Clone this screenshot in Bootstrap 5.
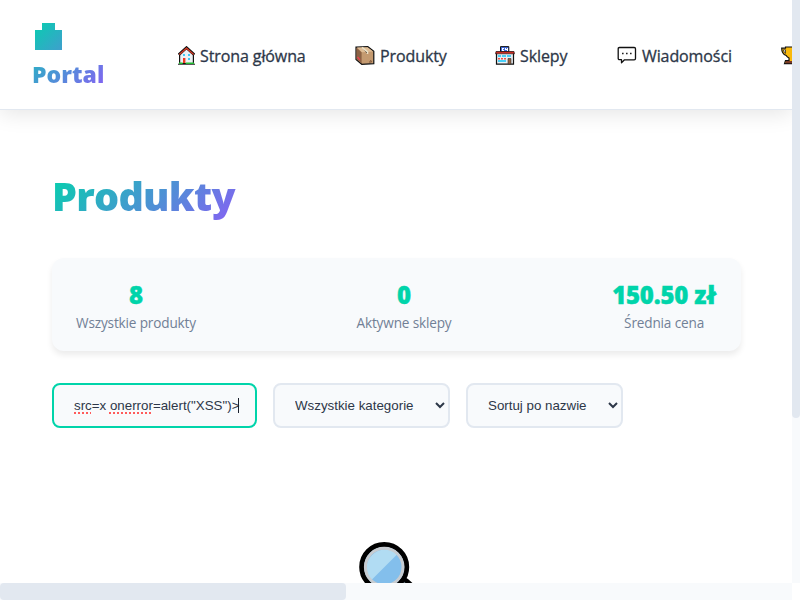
<!DOCTYPE html>
<html lang="pl">
<head>
<meta charset="utf-8">
<meta name="viewport" content="width=device-width, initial-scale=1">
<title>Portal – Produkty</title>
<link href="https://cdn.jsdelivr.net/npm/bootstrap@5.3.0/dist/css/bootstrap.min.css" rel="stylesheet">
<style>
body{font-family:"Open Sans","Noto Sans",sans-serif;color:#2d3748;background:#fff;width:800px;height:600px}
.viewport{width:792px;height:583px}
.topbar{height:110px;border-bottom:1px solid #e2e8f0;box-shadow:0 4px 20px rgba(0,0,0,.1);background:#fff;padding:0 0 0 32px;flex:none}
.brand{width:72px;margin-right:74px;padding-top:23px}
.brand svg{display:block;margin-left:3px}
.brand-name,.title{background:linear-gradient(135deg,#00d4aa,#8b5cf6);-webkit-background-clip:text;background-clip:text;color:transparent;font-weight:800}
.brand-name{font-size:23px;letter-spacing:0;line-height:36px;margin-top:6px;width:75px;white-space:nowrap;background:linear-gradient(135deg,#27b4c2,#8b5cf6);-webkit-background-clip:text;background-clip:text}
.menu{height:110px;flex:none}
.menu a{color:#2d3748;font-weight:500;font-size:16px;text-decoration:none;white-space:nowrap;gap:5px;letter-spacing:-.1px;flex:none}
.menu span{-webkit-text-stroke:.3px #2d3748;padding-top:1px}
.w-home{width:177px}.w-products{width:140px}.w-shops{width:122px}.w-messages{width:164px}
.menu svg{flex:none}
.content{padding:56px 51px 0 52px}
.title{font-size:39.5px;letter-spacing:-.75px;line-height:60px;margin:0;width:188px;white-space:nowrap}
.stats{height:93px;margin-top:32px;background:#f8fafc;border-radius:12px;box-shadow:0 4px 6px rgba(0,0,0,.08);padding:20px 25px 20px 24px}
.stats strong{display:block;font-size:24px;line-height:34px;font-weight:800;color:#00d4aa;white-space:nowrap;letter-spacing:-.2px;-webkit-text-stroke:.4px #00d4aa}
.stats span{display:block;font-size:13.6px;line-height:21px;color:#718096;white-space:nowrap;letter-spacing:-.16px}
.filters{gap:16px;margin-top:32px}
.field{height:45px;border:2px solid #e2e8f0;border-radius:8px;background:#f8fafc;color:#2d3748;font:13.333px/41px "Liberation Sans",Arial,sans-serif}
.query{width:205px;border-color:#00d4aa;padding-left:20px;white-space:pre}
.misspelt{text-decoration:underline dotted #ff5b5b 1.5px;text-underline-offset:2px;text-decoration-skip-ink:none}
.caret{width:1px;height:15px;background:#1a202c;margin-left:-1px}
.cat{width:177px;padding-left:16px;padding-right:3px}
.sort{width:157px;padding-left:16px;padding-right:3px}
.lens{margin:113px 0 0 307px;display:block}
.vbar{width:8px;height:583px;background:#f8fafc}
.vbar div{height:418px;background:#e2e8f0;border-radius:0 0 4px 4px}
.hbar{width:792px;height:17px;background:#f8fafc}
.hbar div{width:346px;height:17px;background:#e2e8f0;border-radius:4px}
</style>
</head>
<body class="overflow-hidden">
<div class="d-flex">
<div class="viewport overflow-hidden">
<header class="topbar d-flex overflow-visible">
  <div class="brand flex-shrink-0">
    <svg width="27" height="27" viewBox="0 0 27 27"><defs><linearGradient id="g" x1="0" y1="0" x2="1" y2="1"><stop stop-color="#08cdb0"/><stop offset="1" stop-color="#3f9fcd"/></linearGradient></defs><path fill="url(#g)" d="M0 7h7V0h13v7h7v20H0z"/></svg>
    <div class="brand-name">Portal</div>
  </div>
  <nav class="menu d-flex align-items-center">
    <a href="#" class="w-home d-flex align-items-center"><svg width="17" height="19" viewBox="0 0 17 19"><path fill="#edf1f5" stroke="#111" stroke-width="1.2" d="M1.6 17.5V8L8.5 1.8 15.4 8v9.5z"/><path fill="none" stroke="#111" stroke-width="2.8" d="M.7 8.7 8.5 1.7l7.8 7"/><path fill="none" stroke="#d83b26" stroke-width="1.3" d="m1.3 8.5 7.2-6.3 7.2 6.3"/><path fill="#43c9f5" d="M5 8h2v2H5zm5 0h2v2h-2zm0 4h2v2h-2z"/><path fill="#ef3922" d="M5 12h2.4v5H5z"/><path stroke="#111" d="M0 18.2h17"/><path stroke="#22bd32" stroke-width="1.4" d="M1 17.2h3.7m3 0H16"/></svg><span>Strona główna</span></a>
    <a href="#" class="w-products d-flex align-items-center"><svg width="20" height="19" viewBox="0 0 20 19"><path fill="#c49a70" stroke="#111" stroke-width="1.2" d="M1 1.2 12.8.7l6 4.7v12.2l-12 .7L1 13.5z"/><path fill="#8c6244" d="m1.6 1.8 5 4.5v11.2l-5-4.2z"/><path fill="#dfbd95" d="m2 1.6 10.6-.4L18 5.5 7 6.2z"/><path stroke="#eee2c8" stroke-width="1.6" d="m7 1.3 5.5 4.5V8"/><path stroke="#ef4050" stroke-width="1.3" d="m2.5 11 2.5 3"/><path stroke="#7c5438" d="M14 16h2.5m-1-2 1 2"/></svg><span>Produkty</span></a>
    <a href="#" class="w-shops d-flex align-items-center"><svg width="20" height="19" viewBox="0 0 20 19"><path fill="#e9edf1" stroke="#111" stroke-width="1.2" d="M1.5 6h17v12.2h-17z"/><path fill="#426ce0" stroke="#111" d="M5.5.6h8.3v5H5.5z"/><path fill="#fff" d="M7 2h2v1H8v1h1v1H7zm3 0h1v1h1V2h1v3h-1V4h-2z"/><path fill="#d72d22" stroke="#111" stroke-width=".6" d="M1 5.6h18l.5 2.2H.5z"/><path fill="#48cff7" d="M3 9h3v2H3zm4 0h4v2H7zm5 0h4v2h-4zm-9 5h8v2H3z"/><path fill="none" stroke="#ef5147" stroke-width="1.4" stroke-dasharray="2 1" d="M3 12.7h9"/><path fill="#96603d" stroke="#333" stroke-width=".6" d="M13 12.5h3V18h-3z"/></svg><span>Sklepy</span></a>
    <a href="#" class="w-messages d-flex align-items-center"><svg width="20" height="18" viewBox="0 0 20 18"><path fill="#fff" stroke="#111" stroke-width="1.3" stroke-linejoin="round" d="M2.5 1.5h14.7q1.3 0 1.3 1.3v9.7q0 1.3-1.3 1.3H7.5L4.5 16.7v-3h-2q-1.3 0-1.3-1.3V2.8q0-1.3 1.3-1.3z"/><path fill="#222" d="M5 6.7h1.6v1.6H5zm4 0h1.6v1.6H9zm4 0h1.6v1.6H13z"/></svg><span>Wiadomości</span></a>
    <a href="#" class="d-flex" aria-label="Ranking"><svg width="20" height="19" viewBox="0 0 20 19"><path fill="#f9b90b" stroke="#111" stroke-width="1.2" d="M4.5 1h11v1.2h3.8q0 6.7-5.2 7.5Q12 11.5 12 12v2.5h2.5l1 3.2h-12l1-3.2H8V12q-2-1-2.8-2.5Q.7 8 .7 2.2h3.8z"/><path fill="#fff" stroke="#111" stroke-width=".7" d="M2.3 3.8h2.2v3.5q-1.6-.9-2.2-3.5z"/><path fill="#7b3924" d="M5 15h10l.5 2.2h-11z"/></svg></a>
  </nav>
</header>
<main class="content">
  <h1 class="title">Produkty</h1>
  <section class="stats d-flex justify-content-between text-center">
    <div><strong>8</strong><span>Wszystkie produkty</span></div>
    <div><strong>0</strong><span>Aktywne sklepy</span></div>
    <div><strong>150.50 zł</strong><span>Średnia cena</span></div>
  </section>
  <form class="filters d-flex">
    <div class="field query d-flex align-items-center" role="textbox"><span class="misspelt">src</span><span>=x </span><span class="misspelt">onerror</span><span>=alert("XSS")&gt;</span><i class="caret"></i></div>
    <select class="field cat"><option>Wszystkie kategorie</option></select>
    <select class="field sort"><option>Sortuj po nazwie</option></select>
  </form>
  <svg class="lens" width="56" height="56" viewBox="0 0 56 56"><path stroke="#000" stroke-width="12" stroke-linecap="round" d="m45 42.5 10 9"/><path stroke="#667782" stroke-width="5" d="m39 38 8 8"/><circle cx="25.2" cy="26" r="22.5" fill="#83bfec" stroke="#000" stroke-width="5"/><path fill="#b1dcf3" d="M12 39.5A18.8 18.8 0 0 1 38.5 13z"/><circle cx="25.2" cy="26" r="18.8" fill="none" stroke="#c7ccd1" stroke-width="3"/></svg>
</main>
</div>
<div class="vbar"><div></div></div>
</div>
<div class="hbar"><div></div></div>
<script src="https://cdn.jsdelivr.net/npm/bootstrap@5.3.0/dist/js/bootstrap.bundle.min.js"></script>
</body>
</html>
